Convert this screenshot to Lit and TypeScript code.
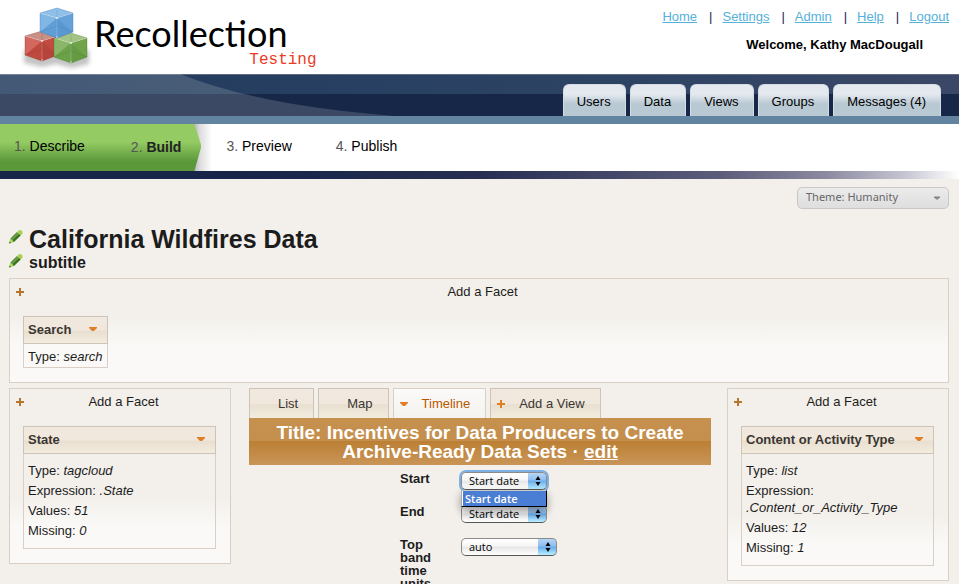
import { LitElement, html, css, svg, nothing } from "lit";
import { customElement, property } from "lit/decorators.js";
import { classMap } from "lit/directives/class-map.js";

const plusIcon = html`<svg class="icon" viewBox="0 0 8 8" width="8" height="8" aria-hidden="true">
  <path d="M3 0h2v3h3v2H5v3H3V5H0V3h3z" fill="currentColor" />
</svg>`;

const caretIcon = html`<svg class="icon" viewBox="0 0 8 8" width="8" height="8" aria-hidden="true">
  <path d="M0 2h8v1L5 6H3L0 3z" fill="currentColor" />
</svg>`;

const pencilIcon = html`<svg viewBox="0 0 14 14" width="14" height="14" aria-hidden="true">
  <path d="M0 13.5 1.2 8.6 4.9 12.2z" fill="#b4d65a" />
  <path d="M1.4 8.4 8 2.1 11.8 5.6 5 12.1z" fill="#4f8a2f" />
  <path d="M2.6 9.5 9.2 3.2" stroke="#6fa552" stroke-width="1.2" />
  <path d="M4.2 11.2 10.9 4.8" stroke="#3a6e22" stroke-width="1.2" />
  <path d="M8 2.1 9.8.5q1.7-.9 2.9.3t.7 2.9L11.8 5.6z" fill="#a9cf4c" />
  <path d="M0 13.5.6 11.5 2 12.9z" fill="#3a5a22" />
</svg>`;

@customElement("cube-logo")
export class CubeLogo extends LitElement {
  static styles = css`
    :host { display: block; }
    svg { display: block; }
  `;

  private cube(x: number, y: number, top: string, face: string, edge: string) {
    return svg`<g transform="translate(${x} ${y})">
      <path d="M0 5 17 10 33 5V24L17 30 0 24z" fill=${face} />
      <path d="M0 5 17 0 33 5 17 10z" fill=${top} />
      <path d="M17 10V30L33 24V5z" fill=${edge} opacity=".12" />
      <path d="M0 24 17 10 33 24 17 30z" fill=${edge} opacity=".18" />
      <path d="M0 5 17 10 0 24z" fill="#fff" opacity=".14" />
      <path d="M17 2V18M0 24 17 18 33 24" fill="none" stroke=${edge} stroke-width=".8" opacity=".25" />
      <path d="M0 5 17 10 33 5M17 10V30" fill="none" stroke="#fff" stroke-width=".8" opacity=".25" />
      <path d="M0 5 17 0 33 5V24L17 30 0 24z" fill="none" stroke=${edge} stroke-width=".8" opacity=".4" />
      <circle cx="17" cy="10" r="1" fill="#fff" opacity=".8" />
      <circle cx="17" cy="29" r=".8" fill="#fff" opacity=".7" />
    </g>`;
  }

  render() {
    return html`<svg viewBox="0 0 74 66" width="74" height="66" role="img" aria-label="Recollection cubes">
      <defs>
        <filter id="soft" x="-20%" y="-20%" width="140%" height="140%"><feGaussianBlur stdDeviation="2" /></filter>
      </defs>
      <path d="M4 44H69V58L52 62 36 58 22 61 4 57z" fill="#888" opacity=".5" filter="url(#soft)" />
      ${this.cube(5, 25, "#c99086", "#cb5046", "#8d2b22")}
      ${this.cube(34, 27, "#a3c486", "#76ab50", "#3f7426")}
      ${this.cube(20, 2, "#8fbfe8", "#6eaae0", "#2f6cae")}
    </svg>`;
  }
}

interface Fact { label: string; value: string; }

@customElement("facet-panel")
export class FacetPanel extends LitElement {
  @property() name = "";
  @property({ type: Boolean }) compact = false;
  @property({ attribute: false }) facts: Fact[] = [];

  static styles = css`
    :host {
      display: block;
      box-sizing: border-box;
      border: 1px solid #dacfc4;
      padding: 0 14px 14px 13px;
      background: linear-gradient(to top, #faf9f7 36px, #f3f0eb 66px);
      font-size: 13px;
      line-height: 17px;
    }
    button { font: inherit; color: inherit; background: none; border: 0; padding: 0; cursor: pointer; }
    .icon { display: block; flex: none; }
    .add {
      display: flex;
      align-items: center;
      width: calc(100% + 14px);
      margin: 0 -7px;
      height: 26px;
    }
    .add .icon { color: #b5762c; }
    .add span { flex: 1; text-align: center; padding-bottom: 2px; }
    .facet { border: 1px solid #dacfc4; margin-top: 11px; }
    .compact { width: fit-content; }
    .title {
      display: flex;
      align-items: center;
      justify-content: space-between;
      gap: 18px;
      width: calc(100% + 2px);
      height: 28px;
      margin: -1px -1px 0;
      padding: 0 10px 2px 4px;
      border: 1px solid #cdc3b7;
      background: linear-gradient(#f1e9df 0, #f0e8dd 50%, #e8dfd0 54%, #f3ecde 100%);
      color: #3a3632;
      font-weight: bold;
      box-sizing: border-box;
    }
    .title .icon { color: #e17f27; }
    dl { display: flex; flex-direction: column; gap: 3px; margin: 0; padding: 8px 4px 9px; }
    .compact dl { padding: 4px 5px 2px 4px; }
    dt, dd { display: inline; margin: 0; }
    dd { font-style: italic; overflow-wrap: anywhere; }
  `;

  render() {
    return html`
      <button class="add" type="button">${plusIcon}<span>Add a Facet</span></button>
      <section class=${classMap({ facet: true, compact: this.compact })}>
        <button class="title" type="button">${this.name}${caretIcon}</button>
        <dl>
          ${this.facts.map((f) => html`<div><dt>${f.label}:</dt> <dd>${f.value}</dd></div>`)}
        </dl>
      </section>
    `;
  }
}

@customElement("pick-list")
export class PickList extends LitElement {
  @property() label = "";
  @property() value = "";
  @property({ type: Boolean, reflect: true }) open = false;
  @property({ type: Boolean, reflect: true }) wide = false;

  static styles = css`
    :host {
      display: grid;
      grid-template-columns: 45px 96px;
      column-gap: 16px;
      align-items: start;
    }
    label { font-size: 13px; line-height: 13px; font-weight: bold; }
    .field { position: relative; width: 86px; }
    :host([wide]) .field { width: 96px; }
    select {
      appearance: none;
      display: block;
      box-sizing: border-box;
      width: 100%;
      height: 18px;
      margin: 0;
      padding: 0 20px 0 7px;
      border: 1px solid #8b8b8b;
      border-bottom-color: #555;
      border-radius: 5px;
      background:
        linear-gradient(#b7d6f5 0, #8dbdf0 45%, #68aaea 50%, #b9f0ff 100%) right / 18px 100% no-repeat,
        linear-gradient(#fff 0, #f5f5f5 45%, #e6e6e6 50%, #fff 100%);
      color: #000;
      font: 11px/16px "Open Sans", "Noto Sans", sans-serif;
    }
    :host([open]) select { box-shadow: 0 0 0 2px #7fb0e4; outline: none; }
    .arrows { position: absolute; top: 4px; right: 6px; pointer-events: none; }
    .menu {
      position: absolute;
      z-index: 2;
      top: 18px;
      left: 0;
      right: 0;
      margin: 0;
      padding: 0 0 0 1px;
      list-style: none;
      border-left: 1px solid #aaa;
      border-right: 1px solid #000;
      border-bottom: 1px solid #000;
      border-top: 1px solid #c9c9c9;
      box-sizing: border-box;
      background: #fff;
      color: #fff;
      font: 11px/15px "Open Sans", "Noto Sans", sans-serif;
      font-weight: 600;
      box-shadow: 0 4px 8px rgba(0, 0, 0, 0.4);
    }
    .menu li { padding-left: 2px; background: #4a7dd4; }
  `;

  render() {
    return html`
      <label for="field">${this.label}</label>
      <div class="field">
        <select id="field"><option>${this.value}</option></select>
        <svg class="arrows" viewBox="0 0 6 10" width="6" height="10" aria-hidden="true">
          <path d="M3 0 5.500 4H.5zM3 10 .5 6h5z" fill="#000" />
        </svg>
        ${this.open
          ? html`<ul class="menu" role="listbox" aria-label=${this.label}>
              <li role="option" aria-selected="true">${this.value}</li>
            </ul>`
          : nothing}
      </div>
    `;
  }
}

@customElement("app-root")
export class AppRoot extends LitElement {
  private links = ["Home", "Settings", "Admin", "Help", "Logout"];
  private sections = ["Users", "Data", "Views", "Groups", "Messages (4)"];
  private steps = ["Describe", "Build", "Preview", "Publish"];

  static styles = css`
    :host {
      display: block;
      height: 100vh;
      overflow-y: auto;
      scrollbar-width: none;
      background: #f3f0eb;
      color: #1c1c1c;
      font-family: "Liberation Sans", Arial, Helvetica, sans-serif;
      font-size: 13px;
      line-height: 17px;
    }
    button { font: inherit; color: inherit; background: none; border: 0; padding: 0; cursor: pointer; }
    ul, ol, h1, h2, h3, p { margin: 0; padding: 0; list-style: none; }
    .icon { display: block; flex: none; }

    .top {
      display: flex;
      justify-content: space-between;
      height: 74px;
      background: #fff;
      color: #000;
    }
    .brand { display: flex; padding: 6px 0 0 20px; }
    .words { display: flex; flex-direction: column; align-items: flex-end; }
    .name { font: 36px/38px Lato, sans-serif; padding: 8px 29px 0 0; }
    .stage { font: 16px/16px "Liberation Mono", monospace; color: #ec3a24; }
    .account { padding: 8px 10px 0 0; }
    .links { display: flex; gap: 12px; }
    .links li { display: flex; gap: 10px; }
    .links a { color: #55b0da; }
    .links li + li::before { content: "|"; color: #23234f; }
    .welcome { margin-top: 11px; padding-right: 26px; text-align: right; font-weight: bold; }

    .nav {
      position: relative;
      display: flex;
      justify-content: flex-end;
      align-items: flex-end;
      height: 42px;
      padding-right: 18px;
      border-bottom: 8px solid #6284a1;
      background:
        linear-gradient(#5e6b83, #5e6b83) top / 100% 1px no-repeat,
        linear-gradient(to right, #213a5c, #2c4364 60%, #3b4766) top / 100% 20px no-repeat,
        #162748;
    }
    .swoosh { position: absolute; left: 0; top: 0; }
    .nav ul { position: relative; display: flex; gap: 4px; }
    .nav a {
      display: block;
      height: 31px;
      line-height: 34px;
      padding: 0 14px 0 13px;
      border: 1px solid #d6dce3;
      border-bottom: 0;
      border-radius: 6px 6px 0 0;
      background: linear-gradient(#e4e9f0 30%, #b9c9d3 60%);
      color: #000;
      text-decoration: none;
    }

    .steps { display: flex; height: 47px; background: #fff; font-size: 14px; line-height: 45px; color: #000; }
    .steps li { padding: 0 22px; color: #555; }
    .steps a { color: #000; text-decoration: none; }
    .steps .first { padding: 0 23px 0 14px; }
    .steps .done { background: linear-gradient(#94cb63 38%, #5b983a 80%); }
    .steps .current { position: relative; padding: 0 20px 0 23px; margin-right: 3px; background: none; isolation: isolate; line-height: 47px; }
    .current::before, .current::after { content: ""; position: absolute; z-index: -1; inset: 0; }
    .current::before {
      background: linear-gradient(#94cb63 38%, #5b983a 80%);
      clip-path: polygon(0 0, calc(100% - 7px) 0, 100% 47%, calc(100% - 7px) 100%, 0 100%);
    }
    .current::after {
      z-index: -2;
      left: auto;
      right: -11px;
      width: 20px;
      background: linear-gradient(to right, #aaa, #ddd 40%, #fff);
    }
    .current a { color: #222; font-weight: bold; }
    .fade {
      height: 8px;
      background: linear-gradient(to right, #172548 0, #172548 25%, #262f52 50%, #5c5c7a 75%, #8a899f 86%, #c2c2d0 94%, #fff 100%);
    }

    main { padding: 8px 10px 0 9px; }
    .theme {
      display: flex;
      align-items: center;
      justify-content: space-between;
      width: 152px;
      height: 22px;
      margin-left: auto;
      padding: 0 8px 3px;
      box-sizing: border-box;
      border: 1px solid #c8c8c8;
      border-radius: 5px;
      background: linear-gradient(#ebebeb, #dedede);
      color: #666;
      font: 11px/17px "Noto Sans", "Open Sans", sans-serif;
    }
    .theme .icon { color: #888; width: 6px; padding-top: 3px; }
    .heading { display: flex; align-items: center; gap: 6px; }
    .heading h1 { font-size: 25px; line-height: 28px; }
    .heading h2 { font-size: 16px; line-height: 19px; }
    .titles { padding: 16px 0 6px; }
    .board {
      display: grid;
      grid-template-columns: 222px 1fr 222px;
      align-items: start;
      gap: 16px;
      padding: 5px 0 9px;
    }
    .center { padding-left: 2px; min-width: 0; }
    .tabs { display: flex; gap: 4px; }
    .tab {
      display: flex;
      align-items: center;
      gap: 14px;
      height: 30px;
      padding: 0 15px 0 6px;
      border: 1px solid #cdc3b7;
      border-bottom: 0;
      background: linear-gradient(#f1e9df 0, #f0e8dd 50%, #e8dfd0 54%, #f3ecde 100%);
      color: #3a3632;
    }
    .tab .icon { color: #e17f27; }
    .selected { background: linear-gradient(#fbfaf9, #f5f3ef); border-color: #dacfc4; color: #b85700; }
    .slot { width: 8px; }
    .banner {
      padding: 5px 20px 4px;
      background: linear-gradient(#c6914f 0, #c48e4c 49%, #bc8034 50%, #c99557 100%);
      color: #fff;
      text-align: center;
      font-size: 19px;
      line-height: 19px;
      font-weight: bold;
    }
    .banner a { color: #fff; }
    form { display: flex; flex-direction: column; gap: 15px; width: 160px; margin: 0 auto; padding-top: 7px; }
  `;

  render() {
    return html`
      <header>
        <div class="top">
          <div class="brand">
            <cube-logo></cube-logo>
            <div class="words"><span class="name">Recollection</span><span class="stage">Testing</span></div>
          </div>
          <div class="account">
            <ul class="links">${this.links.map((t) => html`<li><a href="#">${t}</a></li>`)}</ul>
            <p class="welcome">Welcome, Kathy MacDougall</p>
          </div>
        </div>
        <nav class="nav" aria-label="Sections">
          <svg class="swoosh" viewBox="0 0 400 42" width="400" height="42" aria-hidden="true">
            <path d="M0 0H180Q260 32 395 42H0z" fill="#fff" opacity=".16" />
          </svg>
          <ul>${this.sections.map((t) => html`<li><a href="#">${t}</a></li>`)}</ul>
        </nav>
        <ol class="steps">
          ${this.steps.map(
            (t, i) => html`<li class=${classMap({ first: i === 0, done: i < 2, current: i === 1 })}>
              ${i + 1}. <a href="#">${t}</a>
            </li>`
          )}
        </ol>
        <div class="fade"></div>
      </header>
      <main>
        <button class="theme" type="button">Theme: Humanity ${caretIcon}</button>
        <div class="titles">
          <div class="heading"><button type="button" aria-label="Edit title">${pencilIcon}</button><h1>California Wildfires Data</h1></div>
          <div class="heading"><button type="button" aria-label="Edit subtitle">${pencilIcon}</button><h2>subtitle</h2></div>
        </div>
        <facet-panel name="Search" compact .facts=${[{ label: "Type", value: "search" }]}></facet-panel>
        <div class="board">
          <facet-panel
            name="State"
            .facts=${[
              { label: "Type", value: "tagcloud" },
              { label: "Expression", value: ".State" },
              { label: "Values", value: "51" },
              { label: "Missing", value: "0" },
            ]}
          ></facet-panel>
          <section class="center">
            <div class="tabs">
              <button class="tab" type="button"><span class="slot"></span>List</button>
              <button class="tab" type="button"><span class="slot"></span>Map</button>
              <button class="tab selected" type="button">${caretIcon}Timeline</button>
              <button class="tab" type="button">${plusIcon}Add a View</button>
            </div>
            <h3 class="banner">Title: Incentives for Data Producers to Create Archive-Ready Data Sets · <a href="#">edit</a></h3>
            <form>
              <pick-list label="Start" value="Start date" open></pick-list>
              <pick-list label="End" value="Start date"></pick-list>
              <pick-list label="Top band time units" value="auto" wide></pick-list>
            </form>
          </section>
          <facet-panel
            name="Content or Activity Type"
            .facts=${[
              { label: "Type", value: "list" },
              { label: "Expression", value: ".Content_or_Activity_Type" },
              { label: "Values", value: "12" },
              { label: "Missing", value: "1" },
            ]}
          ></facet-panel>
        </div>
      </main>
    `;
  }
}
